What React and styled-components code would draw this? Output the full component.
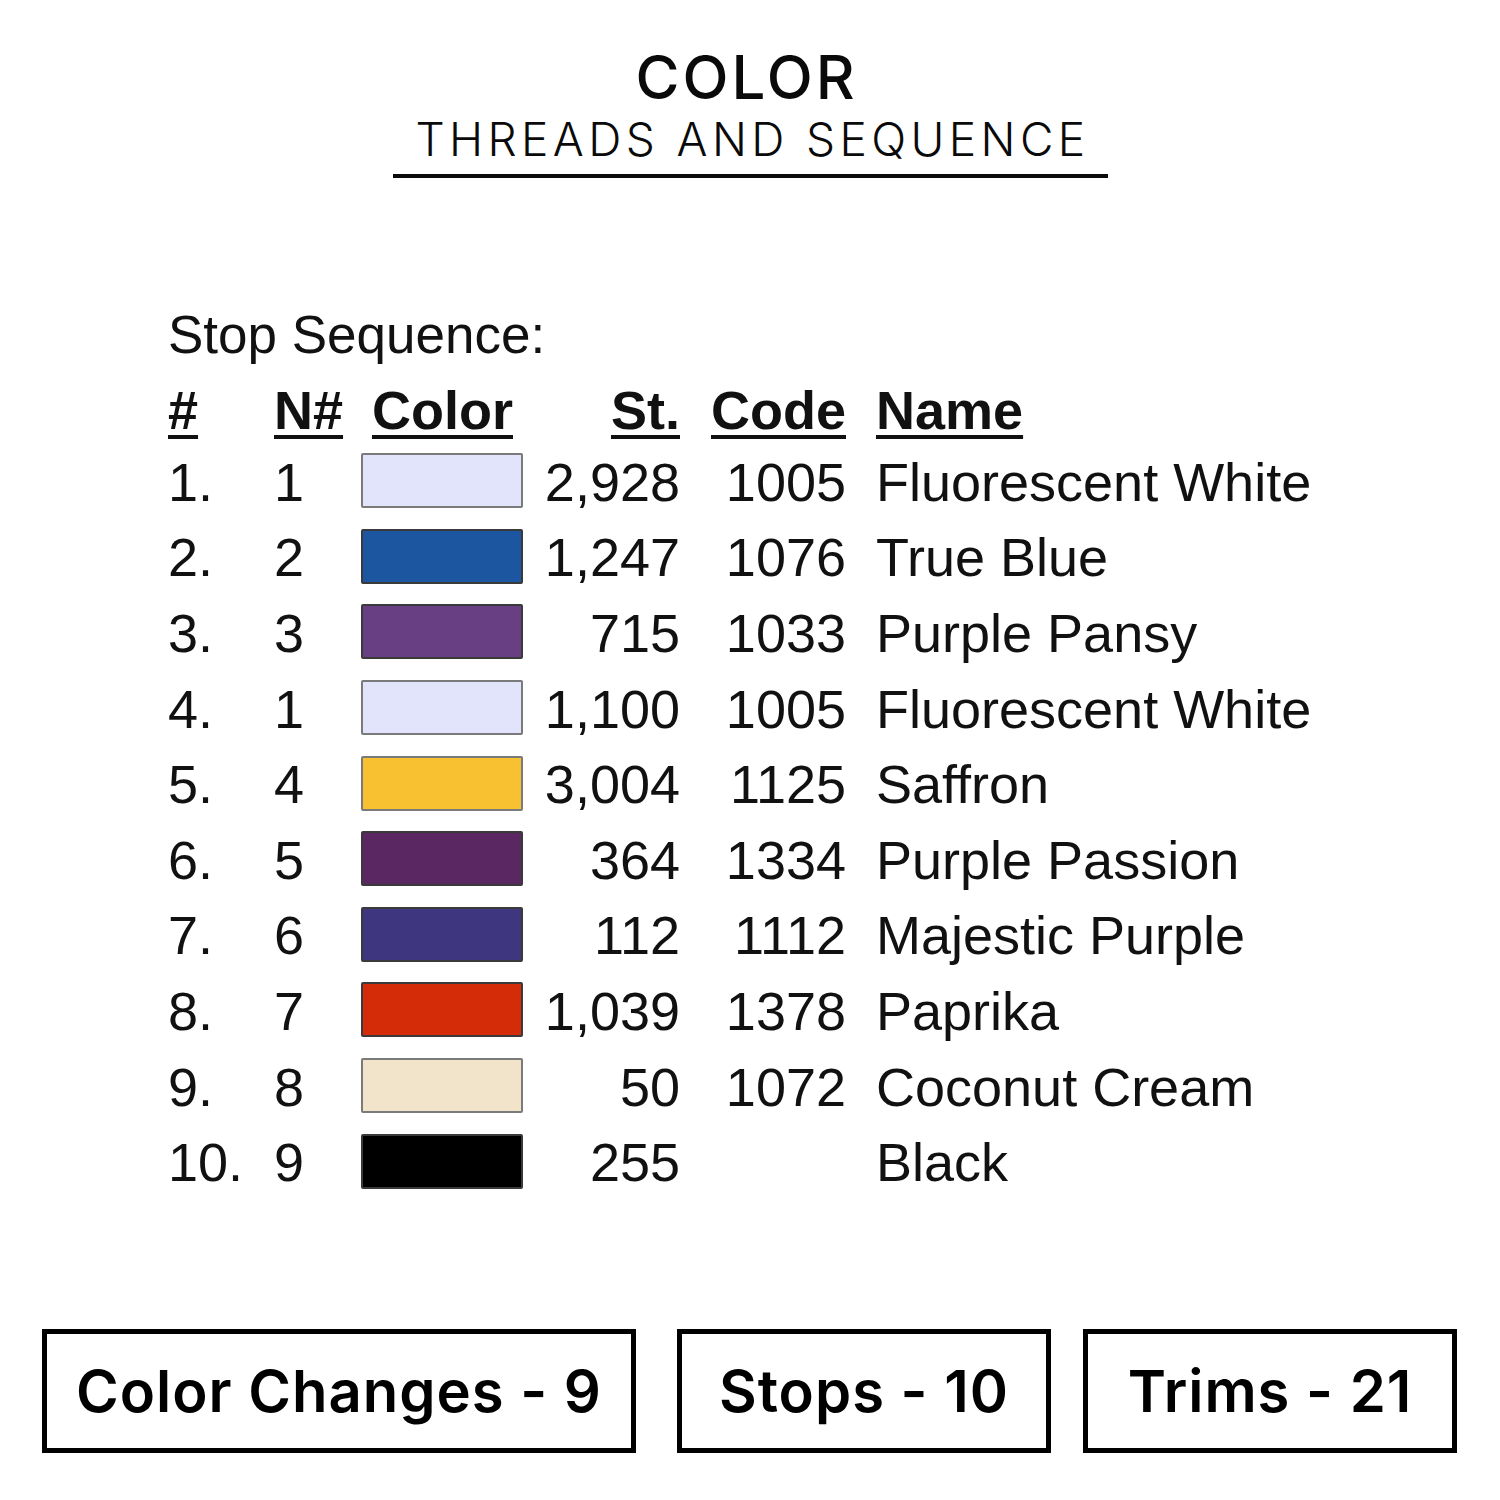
import React from 'react'
import styled, { createGlobalStyle } from 'styled-components'

const GlobalStyle = createGlobalStyle`
  body {
    margin: 0;
    background: #ffffff;
  }
`

const rows = [
  { n: '1.', needle: '1', color: '#e1e4fb', light: true, st: '2,928', code: '1005', name: 'Fluorescent White' },
  { n: '2.', needle: '2', color: '#1c56a1', st: '1,247', code: '1076', name: 'True Blue' },
  { n: '3.', needle: '3', color: '#693f83', st: '715', code: '1033', name: 'Purple Pansy' },
  { n: '4.', needle: '1', color: '#e1e4fb', light: true, st: '1,100', code: '1005', name: 'Fluorescent White' },
  { n: '5.', needle: '4', color: '#f7c132', light: true, st: '3,004', code: '1125', name: 'Saffron' },
  { n: '6.', needle: '5', color: '#5a2763', st: '364', code: '1334', name: 'Purple Passion' },
  { n: '7.', needle: '6', color: '#3e377f', st: '112', code: '1112', name: 'Majestic Purple' },
  { n: '8.', needle: '7', color: '#d42b08', st: '1,039', code: '1378', name: 'Paprika' },
  { n: '9.', needle: '8', color: '#f2e3cb', light: true, st: '50', code: '1072', name: 'Coconut Cream' },
  { n: '10.', needle: '9', color: '#000000', st: '255', code: '', name: 'Black' }
]

const stats = [
  { label: 'Color Changes - 9', width: 594, gap: 0 },
  { label: 'Stops - 10', width: 374, gap: 41 },
  { label: 'Trims - 21', width: 374, gap: 32 }
]

class App extends React.Component {
  render() {
    return (
      <Page>
        <GlobalStyle />
        <Header>
          <Title>COLOR</Title>
          <Subtitle>THREADS AND SEQUENCE</Subtitle>
        </Header>

        <Sheet>
          <SheetTitle>Stop Sequence:</SheetTitle>
          <Table>
            <Head>#</Head>
            <Head>N#</Head>
            <Head indent={11}>Color</Head>
            <Head right>St.</Head>
            <Head right>Code</Head>
            <Head indent={30}>Name</Head>
            {rows.map((r, i) => (
              <React.Fragment key={i}>
                <Cell>{r.n}</Cell>
                <Cell>{r.needle}</Cell>
                <SwatchCell>
                  <Swatch color={r.color} light={r.light} />
                </SwatchCell>
                <Cell right>{r.st}</Cell>
                <Cell right>{r.code}</Cell>
                <Cell indent>{r.name}</Cell>
              </React.Fragment>
            ))}
          </Table>
        </Sheet>

        <Stats>
          {stats.map(s => (
            <StatBox key={s.label} w={s.width} gap={s.gap}>{s.label}</StatBox>
          ))}
        </Stats>
      </Page>
    )
  }
}

const Page = styled.div`
  width: 1500px;
  height: 1500px;
  display: flex;
  flex-direction: column;
  align-items: center;
  background: #fff;
  color: #111;
`

const Header = styled.header`
  margin-top: 44px;
  display: flex;
  flex-direction: column;
  align-items: center;
  font-family: Inter, "DejaVu Sans", sans-serif;
`

const Title = styled.h1`
  margin: 0;
  padding-right: 7px;
  font-size: 60px;
  line-height: 66px;
  font-weight: 500;
  letter-spacing: 3px;
  color: #0a0a0a;
`

const Subtitle = styled.h2`
  margin: 0;
  padding: 2px 0 8px 5px;
  width: 715px;
  box-sizing: border-box;
  text-align: center;
  font-size: 46px;
  line-height: 54px;
  font-weight: 300;
  letter-spacing: 4.4px;
  color: #0a0a0a;
  border-bottom: 4px solid #0a0a0a;
`

const Sheet = styled.section`
  align-self: flex-start;
  margin: 127px 0 0 168px;
  font-family: "Liberation Sans", Arial, sans-serif;
  color: #111;
`

const SheetTitle = styled.div`
  font-size: 53px;
  line-height: 60px;
`

const Table = styled.div`
  margin-top: 12px;
  display: grid;
  grid-template-columns: 106px 87px 162px 157px 166px auto;
  grid-template-rows: 66px;
  grid-auto-rows: 75.6px;
  align-items: center;
  font-size: 54px;
`

const Head = styled.div`
  font-weight: 700;
  text-decoration: underline;
  text-decoration-thickness: 4px;
  text-underline-offset: 6px;
  text-align: ${p => (p.right ? 'right' : 'left')};
  padding-left: ${p => p.indent || 0}px;
`

const Cell = styled.div`
  white-space: nowrap;
  text-align: ${p => (p.right ? 'right' : 'left')};
  padding-left: ${p => (p.indent ? '30px' : '0')};
  padding-top: 2px;
`

const SwatchCell = styled.div`
  display: flex;
  align-items: center;
`

const Swatch = styled.div`
  width: 162px;
  height: 55px;
  box-sizing: border-box;
  background: ${p => p.color};
  border: 2px solid ${p => (p.light ? '#7a7a7a' : '#3a3a3a')};
  border-radius: 2px;
`

const Stats = styled.div`
  margin-top: auto;
  margin-bottom: 47px;
  align-self: stretch;
  padding-left: 42px;
  display: flex;
`

const StatBox = styled.div`
  width: ${p => p.w}px;
  height: 124px;
  margin-left: ${p => p.gap}px;
  box-sizing: border-box;
  border: 5px solid #000;
  display: flex;
  align-items: center;
  justify-content: center;
  font-family: Inter, "DejaVu Sans", sans-serif;
  font-size: 58px;
  font-weight: 600;
  letter-spacing: 1px;
  color: #000;
`

export default App
